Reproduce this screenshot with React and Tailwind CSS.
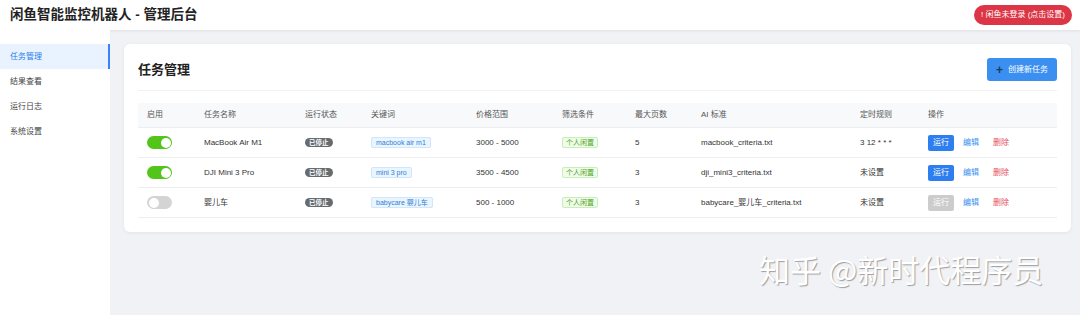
import React from "react";

const tasks = [
  { on: true, name: "MacBook Air M1", kw: "macbook air m1", price: "3000 - 5000", pages: "5", ai: "macbook_criteria.txt", cron: "3 12 * * *" },
  { on: true, name: "DJI Mini 3 Pro", kw: "mini 3 pro", price: "3500 - 4500", pages: "3", ai: "dji_mini3_criteria.txt", cron: "未设置" },
  { on: false, name: "婴儿车", kw: "babycare 婴儿车", price: "500 - 1000", pages: "3", ai: "babycare_婴儿车_criteria.txt", cron: "未设置" },
];

const cols = ["w-[57px]", "w-[101px]", "w-[66px]", "w-[105px]", "w-[86px]", "w-[73px]", "w-[66px]", "w-[159px]", "w-[68px]", "flex-1"];
const headers = ["启用", "任务名称", "运行状态", "关键词", "价格范围", "筛选条件", "最大页数", "AI 标准", "定时规则", "操作"];

const Toggle = ({ on }) => (
  <div className={`flex h-[13px] w-[25px] items-center rounded-full px-[1.5px] ${on ? "justify-end bg-[#52c41a]" : "justify-start bg-[#d4d4d4]"}`}>
    <div className="h-[10px] w-[10px] rounded-full bg-white" />
  </div>
);

const navItems = ["任务管理", "结果查看", "运行日志", "系统设置"];

export default function App() {
  return (
    <div className="relative flex h-[315px] w-[1080px] flex-col overflow-hidden bg-[#f0f2f5] font-['Liberation_Sans','Noto_Sans_CJK_SC',sans-serif] text-[#333]">
      <header className="flex h-[30px] shrink-0 items-center justify-between bg-white pl-[10px] pr-[8px] shadow-[0_1px_3px_rgba(0,0,0,0.08)]">
        <h1 className="text-[13.5px] font-bold text-[#222]">闲鱼智能监控机器人 - 管理后台</h1>
        <button className="h-[20px] rounded-full bg-[#dc3545] px-[7px] text-[8px] text-white">! 闲鱼未登录 (点击设置)</button>
      </header>

      <div className="flex flex-1">
        <aside className="w-[110px] shrink-0 bg-white pt-[14px]">
          {navItems.map((item, i) => (
            <div
              key={item}
              className={`flex h-[25px] items-center pl-[10px] text-[8px] ${i === 0 ? "border-r-2 border-[#3b82f6] bg-[#e8f3ff] text-[#2b7de9]" : "text-[#444]"}`}
            >
              {item}
            </div>
          ))}
        </aside>

        <main className="flex-1 pl-[14px] pr-[9px] pt-[14px]">
          <div className="rounded-[6px] bg-white px-[14px] pb-[14px] pt-[14px] shadow-[0_1px_4px_rgba(0,0,0,0.06)]">
            <div className="flex h-[23px] items-center justify-between">
              <h2 className="text-[13px] font-bold text-[#222]">任务管理</h2>
              <button className="flex h-[23px] items-center gap-[5px] rounded-[3px] bg-[#3b8ff0] px-[9px] text-[8px] text-white">
                <span className="text-[12px] font-bold leading-none text-[#1a3b66]">+</span>
                创建新任务
              </button>
            </div>
            <div className="mt-[9px] border-t border-[#f2f2f2]" />

            <div className="mt-[12px] text-[8px]">
              <div className="flex h-[25px] items-center border-b border-[#eee] bg-[#f8f9fa] text-[#555]">
                {headers.map((h, i) => (
                  <div key={h} className={`${cols[i]} shrink-0 pl-[9px]`}>{h}</div>
                ))}
              </div>
              {tasks.map((t) => (
                <div key={t.name} className="flex h-[30px] items-center border-b border-[#eee] text-[#333]">
                  <div className={`${cols[0]} shrink-0 pl-[9px]`}><Toggle on={t.on} /></div>
                  <div className={`${cols[1]} shrink-0 pl-[9px]`}>{t.name}</div>
                  <div className={`${cols[2]} shrink-0 pl-[9px]`}>
                    <span className="rounded-full bg-[#666b70] px-[4px] py-[1px] text-[6.5px] font-bold text-white">已停止</span>
                  </div>
                  <div className={`${cols[3]} shrink-0 pl-[9px]`}>
                    <span className="rounded-[2px] border border-[#cfe6fb] bg-[#eaf5ff] px-[4px] py-[1px] text-[7px] text-[#2f7fd6]">{t.kw}</span>
                  </div>
                  <div className={`${cols[4]} shrink-0 pl-[9px]`}>{t.price}</div>
                  <div className={`${cols[5]} shrink-0 pl-[9px]`}>
                    <span className="rounded-[2px] border border-[#c9efb8] bg-[#f0fbe9] px-[3px] py-[1px] text-[7px] text-[#4aa624]">个人闲置</span>
                  </div>
                  <div className={`${cols[6]} shrink-0 pl-[9px]`}>{t.pages}</div>
                  <div className={`${cols[7]} shrink-0 pl-[9px]`}>{t.ai}</div>
                  <div className={`${cols[8]} shrink-0 pl-[9px]`}>{t.cron}</div>
                  <div className={`${cols[9]} flex items-center gap-[9px] pl-[9px]`}>
                    <button className={`h-[16px] rounded-[2px] px-[5px] text-[8px] text-white ${t.on ? "bg-[#2d7ff0]" : "bg-[#cccccc]"}`}>运行</button>
                    <span className="text-[8px] text-[#3b8ff0]">编辑</span>
                    <span className="ml-[5px] text-[8px] text-[#e5505f]">删除</span>
                  </div>
                </div>
              ))}
            </div>
          </div>
        </main>
      </div>

      <div className="pointer-events-none absolute left-[759px] top-[246px] font-['Noto_Sans_CJK_SC',sans-serif] text-[31px] text-white [text-shadow:1px_1px_1px_rgba(0,0,0,0.35)]">
        知乎 @新时代程序员
      </div>
    </div>
  );
}
